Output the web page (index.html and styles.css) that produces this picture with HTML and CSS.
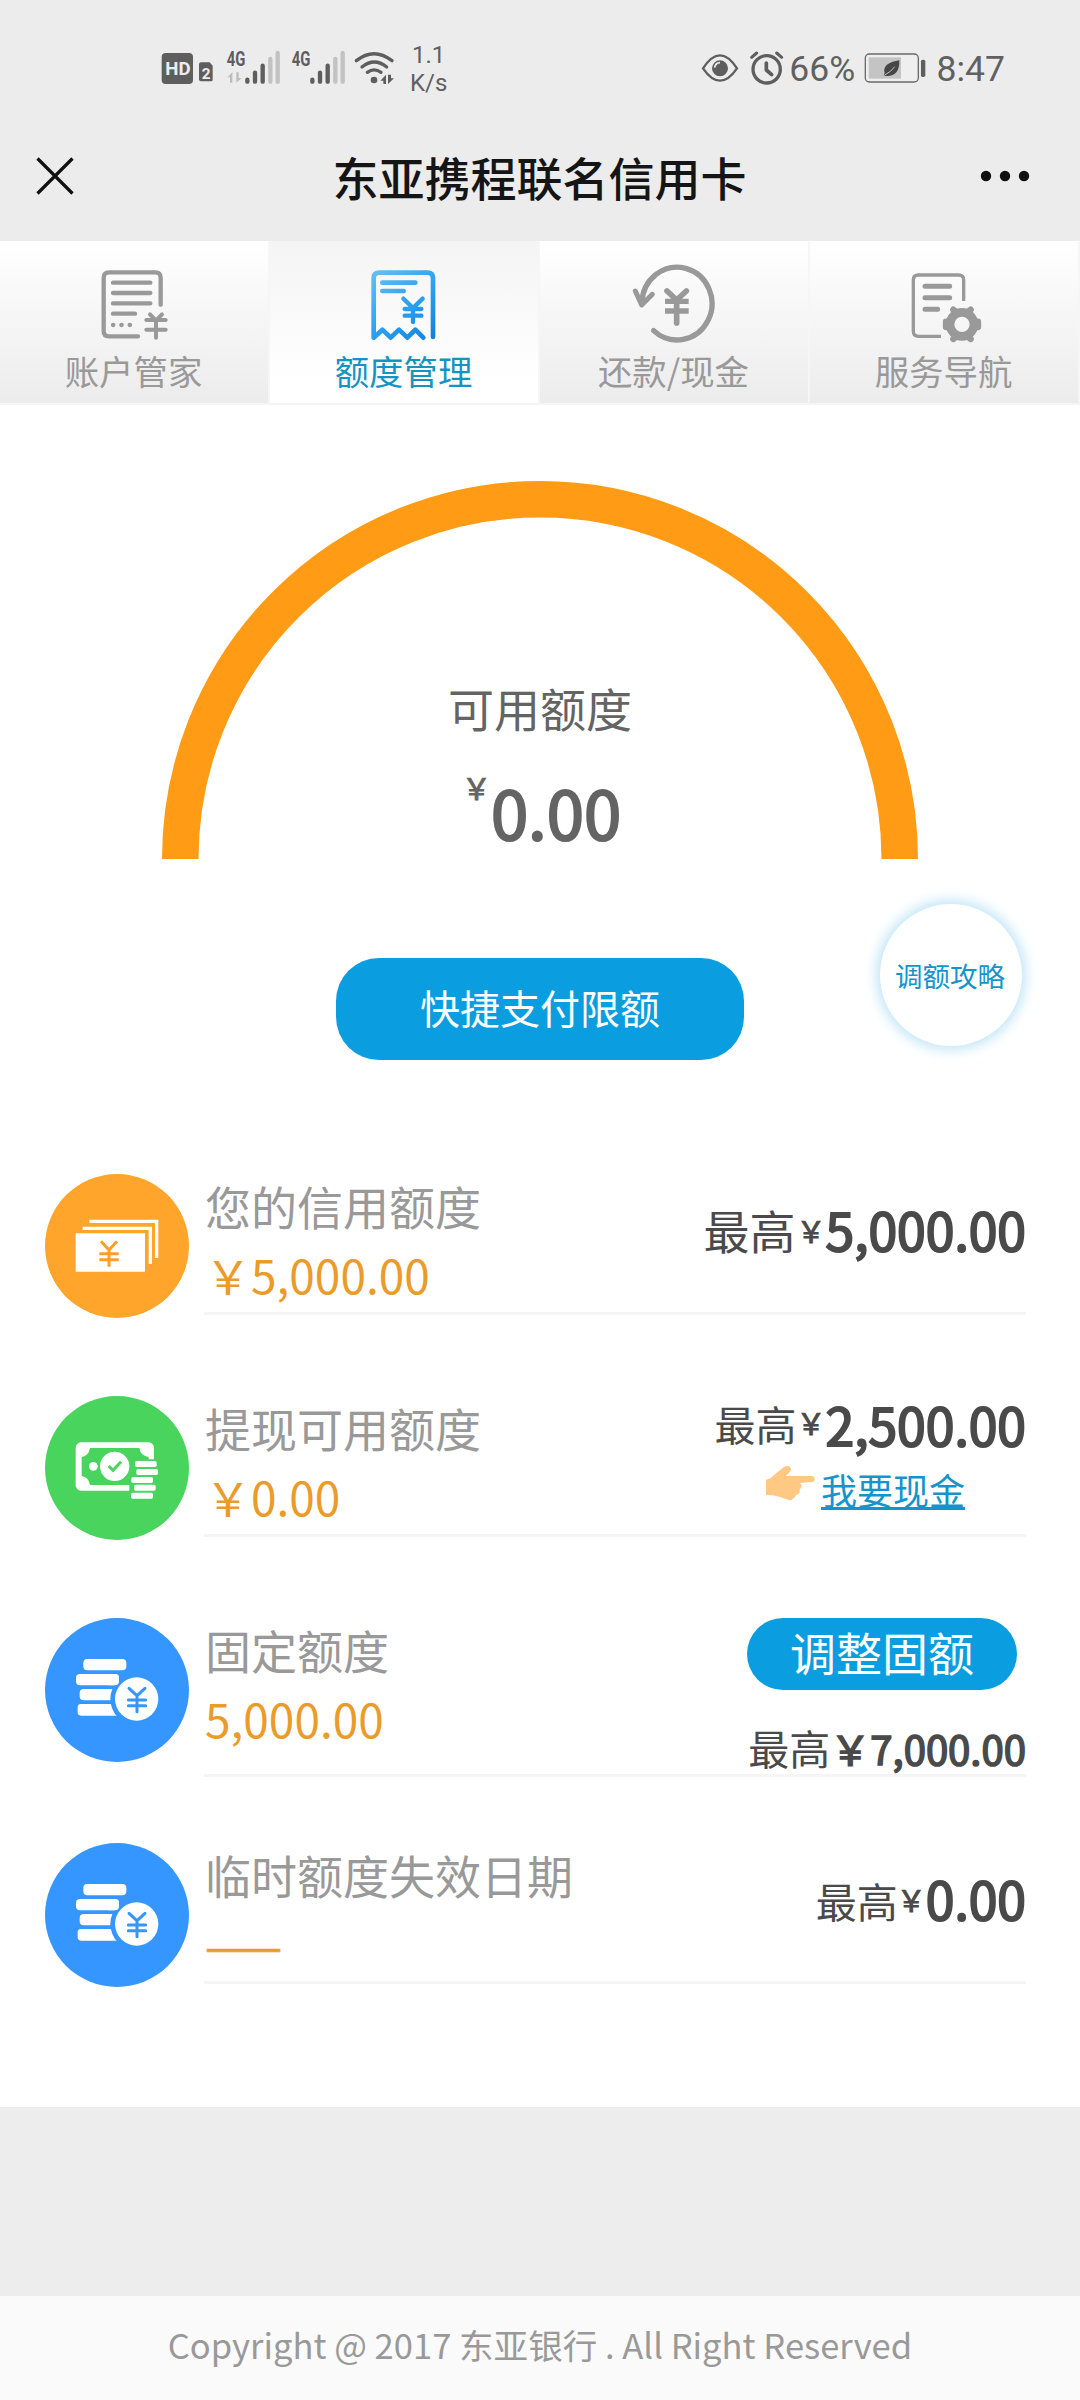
FILE: index.html
```html
<!DOCTYPE html>
<html lang="zh-CN">
<head>
<meta charset="utf-8">
<title>东亚携程联名信用卡</title>
<link rel="stylesheet" href="styles.css">
</head>
<body>
<header class="top">
  <div class="status">
    <svg class="status-net" viewBox="60 0 710 240">
      <rect x="65" y="69" width="94" height="93" rx="12" fill="#5e5e5e"/>
      <text class="net-hd" x="76" y="136" textLength="76" lengthAdjust="spacingAndGlyphs">HD</text>
      <path d="M183 97h26l9 10v42q0 5-5 5h-30q-6 0-6-6v-45q0-6 6-6z" fill="#5e5e5e"/>
      <text class="net-two" x="185" y="147">2</text>
      <text class="net-4g" x="260" y="107" textLength="56" lengthAdjust="spacingAndGlyphs">4G</text>
      <path d="M262 142l15-15v31h-7v-16zM289 127v31l16-14h-9v-17z" fill="#bdbdbd"/>
      <g stroke-width="13" stroke-linecap="round" fill="none">
        <path d="M322 149v6M345 128v27M368 107v48" stroke="#5e5e5e"/>
        <path d="M391 87v68M413 69v86" stroke="#c2c2c2"/>
      </g>
      <text class="net-4g" x="455" y="107" textLength="56" lengthAdjust="spacingAndGlyphs">4G</text>
      <g stroke-width="13" stroke-linecap="round" fill="none">
        <path d="M517 149v6M540 128v27M563 107v48" stroke="#5e5e5e"/>
        <path d="M586 87v68M608 69v86" stroke="#c2c2c2"/>
      </g>
      <g fill="none" stroke="#5e5e5e" stroke-width="10" stroke-linecap="round">
        <path d="M649 92q53-42 107 0M666 111q37-30 74 0M682 127q20-15 41 0"/>
      </g>
      <circle cx="702" cy="150" r="10" fill="#5e5e5e"/>
      <path d="M721 152l17-18v28h-8v-10zM744 134v28l18-17h-9v-11z" fill="#5e5e5e"/>
    </svg>
    <div class="speed"><span>1.1</span><span>K/s</span></div>
    <div class="status-right">
      <svg class="status-eye" viewBox="60 40 255 150" fill="none" stroke="#5e5e5e">
        <path d="M69 116q51-78 102 0q-51 74-102 0z" stroke-width="7"/>
        <circle cx="120" cy="116" r="24" fill="#5e5e5e" stroke="none"/>
        <path d="M104 114q2-14 16-15" stroke="#ececec" stroke-width="5"/>
        <circle cx="260" cy="119" r="41" stroke-width="10"/>
        <path d="M259 100v21l16 14" stroke-width="11" stroke-linecap="round" stroke-linejoin="round"/>
        <path d="M215 83l15-13M305 83l-15-13" stroke-width="9" stroke-linecap="round"/>
      </svg>
      <span class="status-text status-percent">66%</span>
      <svg class="status-battery" viewBox="552 40 190 150">
        <rect x="556" y="73" width="159" height="84" rx="12" fill="#efefef" stroke="#6a6a6a" stroke-width="4"/>
        <rect x="566" y="83" width="97" height="64" fill="#c4c4c4"/>
        <rect x="723" y="90" width="13" height="52" rx="5" fill="#5e5e5e"/>
        <path d="M658 92c-28 4-51 16-44 39l-3 6 6 2c26 2 42-11 41-47z" fill="#464646"/>
        <path d="M613 137q22-12 31-26" fill="none" stroke="#c4c4c4" stroke-width="3"/>
      </svg>
      <span class="status-text">8:47</span>
    </div>
  </div>
  <div class="titlebar">
    <svg class="close" viewBox="0 0 38 38"><path d="M1.500 1.500l35 35M36.500 1.500l-35 35" stroke="#111" stroke-width="3.200"/></svg>
    <h1>东亚携程联名信用卡</h1>
    <svg class="more" viewBox="0 0 50 12" fill="#111"><circle cx="6" cy="6" r="5.200"/><circle cx="25" cy="6" r="5.200"/><circle cx="44" cy="6" r="5.200"/></svg>
  </div>
</header>

<nav class="tabs">
  <a class="tab">
    <svg class="tab-icon" viewBox="87 40 270 240" fill="none" stroke="#999" stroke-width="13" stroke-linecap="round" stroke-linejoin="round">
      <path d="M302 165V84q0-16-16-16H147q-16 0-16 16v160q0 16 16 16h87"/>
      <path d="M159 99h112M159 130h112M159 161h112M159 192h66"/>
      <path d="M159 226h1M184 226h1M209 226h1" stroke-width="13"/>
      <path d="M270 194l18 19 18-19M288 213v51M259 211h58M259 240h58" stroke-width="12"/>
    </svg>
    <span>账户管家</span>
  </a>
  <a class="tab tab-active">
    <svg class="tab-icon" viewBox="897 40 270 240" fill="none" stroke="url(#receipt)" stroke-width="14" stroke-linecap="round" stroke-linejoin="round">
      <defs><linearGradient id="receipt" gradientUnits="userSpaceOnUse" x1="950" y1="70" x2="1110" y2="265"><stop offset="0" stop-color="#62bdf0"/><stop offset=".55" stop-color="#2b9ff0"/><stop offset="1" stop-color="#1284dd"/></linearGradient></defs>
      <path d="M1119 262V86q0-17-17-17H958q-17 0-17 17v178l26-24 25 24 25-24 25 24 24-24 24 24"/>
      <path d="M967 99h99M967 124h64"/>
      <path d="M1030 147l29 28 29-28M1059 175v42M1034 178h50M1034 198h50" stroke-width="13"/>
    </svg>
    <span>额度管理</span>
  </a>
  <a class="tab">
    <svg class="tab-icon" viewBox="87 40 270 240" fill="none" stroke="#999" stroke-width="16" stroke-linecap="round" stroke-linejoin="round">
      <path d="M126 160A105 109 0 1 1 161 243"/>
      <path d="M106 124l19 42 32-32" stroke-width="15"/>
      <path d="M201 124l29 27 29-27M230 151v69" stroke-width="17"/>
      <path d="M195 155h71M195 184h71" stroke-width="16" stroke-linecap="butt"/>
    </svg>
    <span>还款/现金</span>
  </a>
  <a class="tab">
    <svg class="tab-icon" viewBox="897 40 270 240" fill="none" stroke="#999" stroke-width="10" stroke-linejoin="round">
      <path d="M1091 154V91q0-15-15-15H955q-15 0-15 15v154q0 15 15 15h68"/>
      <path d="M975 110h74M975 144h74M975 179h38" stroke-width="15" stroke-linecap="round"/>
      <circle cx="1086" cy="224" r="36" stroke-width="26"/>
      <path d="M1126 216v16h8v-16zM1046 216v16h-8v-16zM1102 188l10-8M1070 188l-10-8M1102 260l10 8M1070 260l-10 8" stroke-width="19" stroke-linecap="round"/>
    </svg>
    <span>服务导航</span>
  </a>
</nav>

<main class="content">
  <section class="gauge">
    <svg class="arc" viewBox="0 0 756 378"><path d="M18.250 378a359.750 359.750 0 0 1 719.500 0" fill="none" stroke="#ff9b14" stroke-width="36.500"/></svg>
    <div class="gauge-text">
      <div class="gauge-label">可用额度</div>
      <div class="gauge-value"><span class="yen">￥</span><b>0.00</b></div>
    </div>
  </section>
  <a class="pay-button">快捷支付限额</a>
  <a class="tips">调额攻略</a>

  <ul class="rows">
    <li class="row">
      <svg class="row-icon" viewBox="45 72 432 432">
        <circle cx="261" cy="288" r="216" fill="#ffa52c"/>
        <path d="M137 250h208v115H137z" fill="#fff"/>
        <path d="M158 235h203v107M178 214h202v110" fill="none" stroke="#fff" stroke-width="10"/>
        <path d="M213 274l24 26 24-26M237 300v50M208 311h58M208 329h58" fill="none" stroke="#ff9f28" stroke-width="9"/>
      </svg>
      <div class="row-body">
        <div><div class="row-label">您的信用额度</div><div class="row-amount">￥5,000.00</div></div>
        <div class="limit limit-first"><span class="most-large">最高</span><span class="yen">￥</span><b>5,000.00</b></div>
      </div>
    </li>
    <li class="row">
      <svg class="row-icon" viewBox="45 738 432 432">
        <circle cx="261" cy="954" r="216" fill="#48d45d"/>
        <rect x="137" y="877" width="235" height="145" rx="16" fill="#fff"/>
        <path d="M180 894h148q4 24 28 27v57q-24 3-28 27H180q-4-24-25-27v-57q21-3 25-27z" fill="#48d45d"/>
        <circle cx="190" cy="949" r="13" fill="#fff"/>
        <circle cx="254" cy="949" r="44" fill="#fff"/>
        <path d="M236 948l13 13 24-26" fill="none" stroke="#48d45d" stroke-width="9"/>
        <path d="M310 928h76v50h-9v73h-79v-75h12z" fill="#48d45d"/>
        <g fill="#fff"><rect x="315" y="933" width="65" height="18" rx="5"/><rect x="319" y="957" width="65" height="18" rx="5"/><rect x="304" y="981" width="65" height="18" rx="5"/><rect x="312" y="1004" width="65" height="18" rx="5"/><rect x="303" y="1028" width="66" height="18" rx="5"/></g>
      </svg>
      <div class="row-body">
        <div><div class="row-label">提现可用额度</div><div class="row-amount">￥0.00</div></div>
        <div class="row-side">
          <div class="limit limit-cash"><span class="most">最高</span><span class="yen">￥</span><b>2,500.00</b></div>
          <div class="cash">
            <svg class="hand" viewBox="258 855 152 108"><path d="M261 899q14-2 24-14l29-23q12-8 20 0 6 8-4 16l-10 10h80q7 1 7 9t-8 9l-36 3q8 8 2 16l-3 5q2 8-5 13l-7 3q-1 9-9 10-3 6-12 4l-24-8q-22-8-44-7z" fill="#ffc983"/></svg>
            <a>我要现金</a>
          </div>
        </div>
      </div>
    </li>
    <li class="row row-tall">
      <svg class="row-icon" viewBox="45 84 432 432">
        <g id="coins">
          <circle cx="261" cy="300" r="216" fill="#3596ff"/>
          <g fill="#fff"><rect x="160" y="207" width="129" height="34" rx="12"/><rect x="138" y="252" width="129" height="34" rx="12"/><rect x="149" y="297" width="118" height="34" rx="12"/><rect x="143" y="342" width="129" height="35" rx="10"/></g>
          <circle cx="320" cy="327" r="79" fill="#3596ff"/>
          <path d="M235 262q0-10 12-10h8q12 0 12 12v10q0 12-12 12h-20z" fill="#fff"/>
          <circle cx="320" cy="327" r="65" fill="#fff"/>
          <path d="M297 295l24 22 24-22M321 317v48M295 330h52M295 347h52" fill="none" stroke="#3596ff" stroke-width="9" stroke-linecap="round"/>
        </g>
      </svg>
      <div class="row-body">
        <div><div class="row-label">固定额度</div><div class="row-amount">5,000.00</div></div>
        <div class="row-side">
          <a class="adjust">调整固额</a>
          <div class="limit limit-fixed"><span class="most">最高</span><b>￥7,000.00</b></div>
        </div>
      </div>
    </li>
    <li class="row">
      <svg class="row-icon" viewBox="45 84 432 432"><use href="#coins"/></svg>
      <div class="row-body">
        <div><div class="row-label">临时额度失效日期</div><div class="row-amount row-empty">——</div></div>
        <div class="limit limit-temp"><span class="most">最高</span><span class="yen">￥</span><b>0.00</b></div>
      </div>
    </li>
  </ul>
</main>
<footer class="footer">Copyright @ 2017 东亚银行 . All Right Reserved</footer>
</body>
</html>
```
FILE: styles.css
```css
* { box-sizing: border-box; }
body {
  margin: 0;
  width: 1080px;
  height: 2400px;
  display: flex;
  flex-direction: column;
  background: #ededed;
  font-family: "Noto Sans CJK SC", sans-serif;
  overflow: hidden;
}
svg { display: block; flex: none; }
b { font-weight: 400; }

.top { height: 241px; background: #ececec; }
.status {
  display: flex;
  height: 110px;
  padding: 30px 0 0 160px;
  color: #606060;
  font-family: Roboto, sans-serif;
}
.status-net { width: 236.700px; height: 80px; }
.net-hd { font: 700 54px Roboto, sans-serif; fill: #ececec; }
.net-two { font: 700 46px Roboto, sans-serif; fill: #ececec; }
.net-4g { font: 700 59px Roboto, sans-serif; fill: #5e5e5e; }
.speed {
  display: flex;
  flex-direction: column;
  align-items: center;
  width: 64px;
  padding-top: 11px;
  font-size: 24px;
  line-height: 28px;
}
.status-right { display: flex; margin-left: auto; padding: 13.300px 75px 0 0; }
.status-eye { width: 85px; height: 50px; }
.status-battery { width: 63.300px; height: 50px; margin: 0 9.500px 0 8.500px; }
.status-text { font-size: 35.500px; line-height: 52px; }
.status-percent { margin-left: 4px; }

.titlebar {
  display: flex;
  align-items: center;
  justify-content: space-between;
  height: 132px;
  padding: 0 50px 0 36px;
}
.titlebar h1 {
  margin: 0 0 0 25px;
  color: #151515;
  font-size: 46px;
  font-weight: 500;
  line-height: 70px;
}
.close { width: 38px; height: 38px; }
.more { width: 50px; height: 12px; }

.tabs { display: flex; height: 164px; border-bottom: 2px solid #f5f5f5; }
.tab {
  display: flex;
  flex-direction: column;
  align-items: center;
  width: 270px;
  padding-top: 22.300px;
  border-right: 2px solid #f6f6f6;
  background: linear-gradient(#fff, #ececec);
  color: #999;
  font-size: 34.400px;
  line-height: 50px;
}
.tab-active { background: linear-gradient(#f4f4f4, #fff 85%); color: #1494c2; }
.tab-icon { width: 90px; height: 80px; }
.tab span { margin: 2px 0 0 -1px; }

.content { position: relative; height: 1702px; background: #fff; padding-top: 76px; }
.gauge { display: grid; justify-content: center; color: #646464; }
.arc, .gauge-text { grid-area: 1 / 1; }
.arc { width: 756px; height: 378px; }
.gauge-text { padding-top: 191px; text-align: center; }
.gauge-label { font-size: 46px; line-height: 70px; }
.gauge-value {
  display: flex;
  align-items: flex-start;
  justify-content: center;
  height: 100px;
  padding: 19px 0 0 3px;
}
.gauge-value b { font-size: 67px; line-height: 100px; -webkit-text-stroke: 2.200px; }
.gauge-value .yen { line-height: 52px; }
.yen { font-size: 29px; -webkit-text-stroke: 1px; }

.pay-button {
  display: block;
  width: 408px;
  margin: 99px auto 0;
  border-radius: 43px;
  background: #0a9ee0;
  color: #fff;
  font-size: 40px;
  line-height: 98px;
  height: 102px;
  text-align: center;
}
.tips {
  position: absolute;
  left: 880px;
  top: 499px;
  width: 142px;
  height: 142px;
  border-radius: 50%;
  background: #fff;
  box-shadow: 0 0 14px 3px #b9e2f5;
  color: #1494cc;
  font-size: 27.500px;
  line-height: 143px;
  padding-right: 2px;
  text-align: center;
}

.rows { margin: 114px 0 0; padding: 0 54px 0 45px; list-style: none; }
.row { display: flex; align-items: flex-start; gap: 15px; height: 222px; }
.row-tall { height: 225px; }
.row-icon { width: 144px; height: 144px; }
.row-body {
  display: flex;
  flex: 1;
  justify-content: space-between;
  height: 141px;
  border-bottom: 3px solid #f5f5f5;
}
.row-tall .row-body { height: 159px; }
.row-label { padding-left: 1px; color: #999; font-size: 46px; line-height: 62px; }
.row-amount { padding-left: 1px; color: #eb9b2a; font-size: 46px; line-height: 76px; }
.row-empty { line-height: 76px; -webkit-text-stroke: .6px; }
.row-side { display: flex; flex-direction: column; align-items: flex-end; }

.limit {
  display: flex;
  flex: none;
  align-items: baseline;
  justify-content: flex-end;
  height: 80px;
  color: #4a4a4a;
  line-height: 80px;
  white-space: nowrap;
}
.limit b { font-size: 51.600px; -webkit-text-stroke: 2px; }
.most-large { position: relative; top: -2px; margin-right: 1px; font-size: 46px; }
.most { font-size: 41px; }
.limit .yen { position: relative; top: -8px; }
.limit-first { padding-top: 15px; }
.limit-cash { height: 62px; line-height: 56px; }
.limit-cash .most { position: relative; top: -5px; }
.limit-cash .yen { top: -11px; }
.limit-temp { padding-top: 15px; }
.limit-temp .most { position: relative; top: -2px; left: 1px; }
.limit-fixed { height: 96px; padding-top: 17px; }
.limit-fixed b { font-size: 40.100px; -webkit-text-stroke: 1.600px; }

.cash { display: flex; align-items: flex-start; gap: 5px; padding-right: 61px; }
.hand { width: 50.700px; height: 36px; margin-top: 7px; }
.cash a {
  height: 52px;
  border-bottom: 3px solid #1494cc;
  color: #1494cc;
  font-size: 36px;
  line-height: 63px;
}
.adjust {
  flex: none;
  width: 270px;
  height: 72px;
  margin-right: 9px;
  border-radius: 36px;
  background: #0a9ee0;
  color: #fff;
  font-size: 46px;
  line-height: 67px;
  text-align: center;
}

.footer {
  height: 104px;
  margin-top: auto;
  background: #fafafa;
  color: #999;
  font-size: 34.550px;
  line-height: 97px;
  text-align: center;
}
```
